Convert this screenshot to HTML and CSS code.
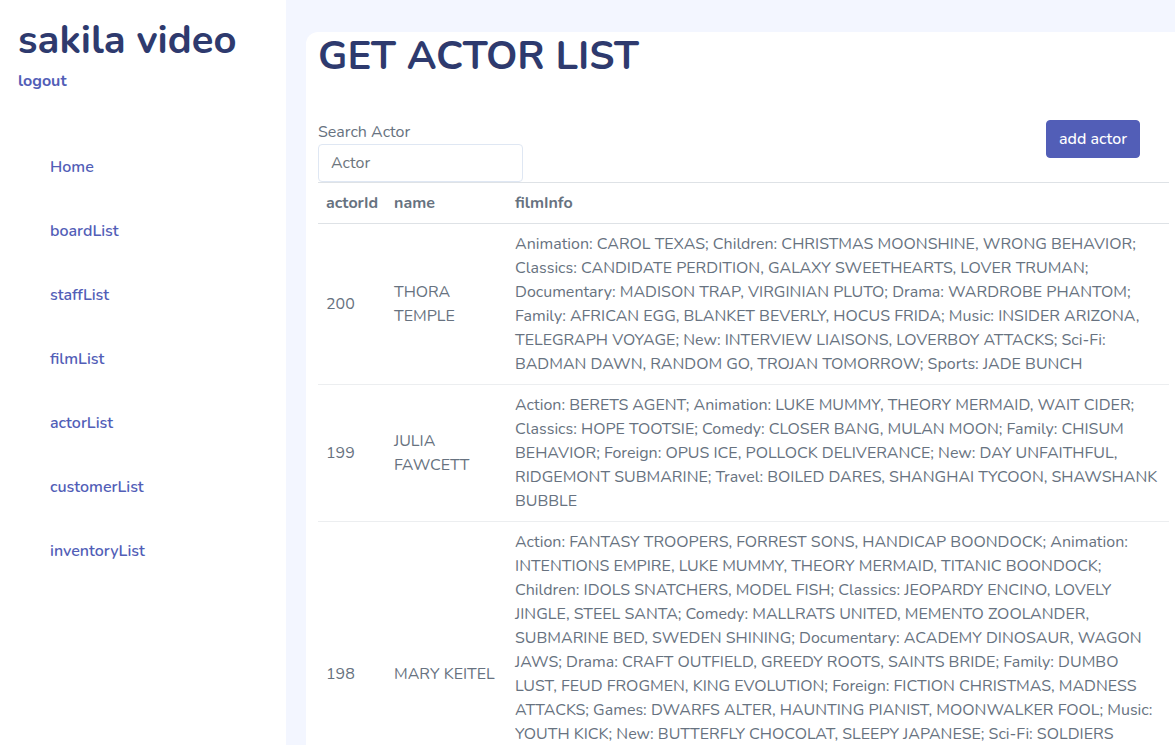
FILE: index.html
```html
<!DOCTYPE html>
<html lang="en">
<head>
<meta charset="utf-8">
<title>sakila video</title>
<link rel="stylesheet" href="styles.css">
</head>
<body>
<div class="layout">
  <aside class="sidebar">
    <h1 class="brand">sakila video</h1>
    <a class="logout" href="#">logout</a>
    <nav class="menu">
      <a href="#">Home</a>
      <a href="#">boardList</a>
      <a href="#">staffList</a>
      <a href="#">filmList</a>
      <a href="#">actorList</a>
      <a href="#">customerList</a>
      <a href="#">inventoryList</a>
    </nav>
  </aside>
  <main class="content">
    <section class="panel">
      <h1 class="title">GET ACTOR LIST</h1>
      <div class="toolbar">
        <div class="search">
          <label for="actor">Search Actor</label>
          <input id="actor" type="text" placeholder="Actor">
        </div>
        <button class="add" type="button">add actor</button>
      </div>
      <table class="actors">
        <thead>
          <tr><th class="col-id">actorId</th><th class="col-name">name</th><th>filmInfo</th></tr>
        </thead>
        <tbody>
          <tr>
            <td>200</td><td>THORA TEMPLE</td>
            <td class="films">Animation: CAROL TEXAS; Children: CHRISTMAS MOONSHINE, WRONG BEHAVIOR; Classics: CANDIDATE PERDITION, GALAXY SWEETHEARTS, LOVER TRUMAN; Documentary: MADISON TRAP, VIRGINIAN PLUTO; Drama: WARDROBE PHANTOM; Family: AFRICAN EGG, BLANKET BEVERLY, HOCUS FRIDA; Music: INSIDER ARIZONA, TELEGRAPH VOYAGE; New: INTERVIEW LIAISONS, LOVERBOY ATTACKS; Sci-Fi: BADMAN DAWN, RANDOM GO, TROJAN TOMORROW; Sports: JADE BUNCH</td>
          </tr>
          <tr>
            <td>199</td><td>JULIA FAWCETT</td>
            <td class="films">Action: BERETS AGENT; Animation: LUKE MUMMY, THEORY MERMAID, WAIT CIDER; Classics: HOPE TOOTSIE; Comedy: CLOSER BANG, MULAN MOON; Family: CHISUM BEHAVIOR; Foreign: OPUS ICE, POLLOCK DELIVERANCE; New: DAY UNFAITHFUL, RIDGEMONT SUBMARINE; Travel: BOILED DARES, SHANGHAI TYCOON, SHAWSHANK BUBBLE</td>
          </tr>
          <tr class="tall">
            <td>198</td><td>MARY KEITEL</td>
            <td class="films">Action: FANTASY TROOPERS, FORREST SONS, HANDICAP BOONDOCK; Animation: INTENTIONS EMPIRE, LUKE MUMMY, THEORY MERMAID, TITANIC BOONDOCK; Children: IDOLS SNATCHERS, MODEL FISH; Classics: JEOPARDY ENCINO, LOVELY JINGLE, STEEL SANTA; Comedy: MALLRATS UNITED, MEMENTO ZOOLANDER, SUBMARINE BED, SWEDEN SHINING; Documentary: ACADEMY DINOSAUR, WAGON JAWS; Drama: CRAFT OUTFIELD, GREEDY ROOTS, SAINTS BRIDE; Family: DUMBO LUST, FEUD FROGMEN, KING EVOLUTION; Foreign: FICTION CHRISTMAS, MADNESS ATTACKS; Games: DWARFS ALTER, HAUNTING PIANIST, MOONWALKER FOOL; Music: YOUTH KICK; New: BUTTERFLY CHOCOLAT, SLEEPY JAPANESE; Sci-Fi: SOLDIERS</td>
          </tr>
        </tbody>
      </table>
    </section>
  </main>
</div>
</body>
</html>
```
FILE: styles.css
```css
* { box-sizing: border-box; }
html { scrollbar-width: none; }
body {
  margin: 0;
  background: #f3f6ff;
  color: #677280;
  font: 16px/24px Nunito, Lato, "Open Sans", sans-serif;
}
a { color: #525eb7; text-decoration: none; }
.layout { display: flex; min-height: 100vh; }
.sidebar {
  flex: 0 0 286px;
  padding: 16px 18px;
  background: #fff;
}
.brand, .title { margin: 0; color: #2e3a6e; font-size: 40px; line-height: 48px; font-weight: 700; white-space: nowrap; }
.logout { display: block; margin-top: 5px; font-weight: 700; }
.menu { display: flex; flex-direction: column; gap: 40px; padding: 62px 32px; font-weight: 600; }
.content { flex: 1; min-width: 0; padding: 32px 0 0 20px; }
.panel { padding: 0 6px 0 12px; background: #fff; border-top-left-radius: 12px; }
.toolbar { display: flex; justify-content: space-between; align-items: flex-start; padding: 40px 29px 0 0; }
.search { display: flex; flex-direction: column; width: 205px; }
.search input {
  height: 38px;
  padding: 6px 12px;
  border: 1px solid #dfe7f3;
  border-radius: 4px;
  background: #fff;
  color: #6c757d;
  font: inherit;
}
.search input::placeholder { color: #6c757d; opacity: 1; }
.add {
  height: 38px;
  padding: 6px 12px;
  border: 1px solid #525eb7;
  border-radius: 4px;
  background: #525eb7;
  color: #fff;
  font: inherit;
  font-weight: 500;
}
.actors { width: 100%; border-collapse: collapse; }
.actors th, .actors td { padding: 8px; border-top: 1px solid #dee2e6; text-align: left; }
.actors tbody tr + tr td { border-top-color: #eceef0; }
.actors .tall { height: 305px; }
.actors .films { vertical-align: top; }
.col-id { width: 68px; }
.col-name { width: 121px; }
```
